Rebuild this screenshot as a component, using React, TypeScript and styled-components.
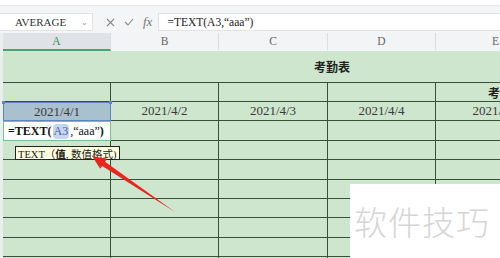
import styled, { createGlobalStyle } from "styled-components";

const GlobalStyle = createGlobalStyle`
  html, body { margin: 0; padding: 0; background: #fff; }
  #root { width: 500px; height: 258px; overflow: hidden; }
`;

const SERIF = `"Liberation Serif", "Noto Sans CJK SC", serif`;
const GRID = "#36503a";
const FILL = "#cde6cd";
const COLS = [108, 108, 109, 108, 120];

const Page = styled.div`
  position: relative;
  width: 500px;
  height: 258px;
  overflow: hidden;
  font-family: ${SERIF};
`;

const TopStrip = styled.div`
  height: 5px;
  background: #fff;
  border-bottom: 1px solid #e6e6e6;
`;

const Spacer = styled.div<{ $h: number }>`
  height: ${(p) => p.$h}px;
  background: #f4f5f6;
`;

const FormulaBar = styled.div`
  display: flex;
  align-items: center;
  height: 18px;
  background: #f4f5f6;
`;

const NameBox = styled.div`
  box-sizing: border-box;
  width: 93px;
  height: 18px;
  display: flex;
  align-items: center;
  justify-content: space-between;
  padding: 0 4px 0 15px;
  background: #fff;
  border: 1px solid #e2e2e2;
  border-left: none;
  font-size: 11px;
  color: #333;
`;

const Caret = styled.span`
  font-size: 8px;
  color: #999;
`;

const Tools = styled.div`
  display: flex;
  align-items: center;
  gap: 9px;
  padding: 0 6px 0 13px;
  color: #8a8a8a;
`;

const FxLabel = styled.span`
  font-family: "Liberation Serif", serif;
  font-style: italic;
  font-size: 13px;
  color: #7a7a7a;
`;

const FormulaInput = styled.div`
  box-sizing: border-box;
  flex: 1;
  height: 18px;
  display: flex;
  align-items: center;
  padding-left: 8px;
  background: #fff;
  border: 1px solid #e2e2e2;
  border-right: none;
  font-size: 11.5px;
  color: #222;
`;

const HeaderRow = styled.div`
  display: flex;
  height: 18px;
  background: #f3f4f6;
`;

const Corner = styled.div`
  width: 3px;
  flex: none;
  background: #eceeef;
`;

const ColHead = styled.div<{ $w: number; $active?: boolean }>`
  box-sizing: border-box;
  flex: none;
  width: ${(p) => p.$w}px;
  display: flex;
  align-items: center;
  justify-content: center;
  font-size: 11.5px;
  color: ${(p) => (p.$active ? "#3b8a5c" : "#666")};
  background: ${(p) => (p.$active ? "#dfe2e6" : "transparent")};
  border-right: 1px solid #dcdcdc;
  border-bottom: 2px solid ${(p) => (p.$active ? "#45a66d" : "transparent")};
`;

const Sheet = styled.div`
  display: flex;
  flex-direction: column;
  background: ${FILL};
`;

const Row = styled.div<{ $h: number }>`
  display: flex;
  height: ${(p) => p.$h}px;
  flex: none;
`;

const Gutter = styled.div`
  width: 3px;
  flex: none;
  background: #e9efea;
`;

const TitleCell = styled.div`
  box-sizing: border-box;
  flex: none;
  width: 658px;
  display: flex;
  align-items: center;
  justify-content: center;
  padding-bottom: 1px;
  border-bottom: 1px solid ${GRID};
  font-family: "Noto Sans CJK SC", sans-serif;
  font-weight: 700;
  font-size: 12px;
  color: #222;
`;

const Cell = styled.div<{ $w: number; $align?: string; $pad?: number }>`
  box-sizing: border-box;
  flex: none;
  width: ${(p) => p.$w}px;
  display: flex;
  align-items: center;
  justify-content: ${(p) => p.$align ?? "center"};
  padding-left: ${(p) => p.$pad ?? 0}px;
  border-right: 1px solid ${GRID};
  border-bottom: 1px solid ${GRID};
  font-size: 13px;
  color: #3a3a3a;
  white-space: nowrap;
  overflow: hidden;
`;

const HeadText = styled.span`
  font-family: "Noto Sans CJK SC", sans-serif;
  font-weight: 700;
  font-size: 12px;
  color: #222;
`;

const SelectedCell = styled(Cell)`
  position: relative;
  background: #a9c0cf;
  border: 1px solid #5c86c4;
  overflow: visible;
`;

const Handle = styled.span<{ $side: "l" | "r" }>`
  position: absolute;
  top: -2px;
  ${(p) => (p.$side === "l" ? "left: -2px;" : "right: -2px;")}
  width: 3px;
  height: 3px;
  background: #5c86c4;
`;

const EditCell = styled(Cell)`
  background: #fff;
  border: 1px solid #7cbf95;
  padding-left: 4px;
  justify-content: flex-start;
  font-size: 12px;
  color: #111;
  overflow: visible;
`;

const Fn = styled.span`
  font-weight: 700;
`;

const Ref = styled.span`
  background: #c9d5ec;
  color: #3d5aa8;
  border-radius: 4px;
  padding: 0 1px;
  margin: 0 1px;
`;

const Tip = styled.div`
  position: absolute;
  left: 15px;
  top: 146px;
  height: 12px;
  padding: 0 2px;
  display: flex;
  align-items: center;
  background: #ffffe1;
  border: 1px solid #222;
  font-family: ${SERIF};
  font-size: 10.5px;
  color: #222;
  white-space: nowrap;
`;

const Arrow = styled.svg`
  position: absolute;
  left: 0;
  top: 0;
  pointer-events: none;
`;

const Watermark = styled.div`
  position: absolute;
  left: 350px;
  top: 184px;
  width: 150px;
  height: 74px;
  background: #fff;
  display: flex;
  align-items: center;
  padding-left: 4px;
  box-sizing: border-box;
  font-family: "Noto Sans CJK SC", sans-serif;
  font-weight: 300;
  font-size: 33px;
  letter-spacing: 1px;
  color: #d6d6d6;
`;

const dates = ["2021/4/2", "2021/4/3", "2021/4/4", "2021/4/5"];
const ROW_H = 19.4;

export default function App() {
  const blank = (key: string) => (
    <Row $h={ROW_H} key={key}>
      <Gutter />
      {COLS.map((w, i) => (
        <Cell $w={w} key={i} />
      ))}
    </Row>
  );

  return (
    <Page>
      <GlobalStyle />
      <TopStrip />
      <Spacer $h={7} />
      <FormulaBar>
        <NameBox>
          AVERAGE
          <Caret>⌄</Caret>
        </NameBox>
        <Tools>
          <svg width="9" height="9" viewBox="0 0 9 9">
            <path d="M1 1 L8 8 M8 1 L1 8" stroke="#8a8a8a" strokeWidth="1.1" />
          </svg>
          <svg width="10" height="8" viewBox="0 0 10 8">
            <path d="M1 4 L4 7 L9 1" stroke="#8a8a8a" strokeWidth="1.1" fill="none" />
          </svg>
          <FxLabel>fx</FxLabel>
        </Tools>
        <FormulaInput>=TEXT(A3,“aaa”)</FormulaInput>
      </FormulaBar>
      <Spacer $h={2} />
      <HeaderRow>
        <Corner />
        {["A", "B", "C", "D", "E"].map((c, i) => (
          <ColHead $w={COLS[i]} $active={c === "A"} key={c}>
            {c}
          </ColHead>
        ))}
      </HeaderRow>
      <Sheet>
        <Row $h={32}>
          <Gutter />
          <TitleCell>考勤表</TitleCell>
        </Row>
        <Row $h={19}>
          <Gutter />
          {COLS.slice(0, 4).map((w, i) => (
            <Cell $w={w} key={i} />
          ))}
          <Cell $w={COLS[4]} $align="flex-start" $pad={52}>
            <HeadText>考勤</HeadText>
          </Cell>
        </Row>
        <Row $h={ROW_H}>
          <Gutter />
          <SelectedCell $w={COLS[0]}>
            2021/4/1
            <Handle $side="l" />
            <Handle $side="r" />
          </SelectedCell>
          {dates.map((d, i) => (
            <Cell $w={COLS[i + 1]} key={d}>
              {d}
            </Cell>
          ))}
        </Row>
        <Row $h={ROW_H}>
          <Gutter />
          <EditCell $w={COLS[0]}>
            <Fn>=TEXT(</Fn>
            <Ref>A3</Ref>,“aaa”<Fn>)</Fn>
          </EditCell>
          {COLS.slice(1).map((w, i) => (
            <Cell $w={w} key={i} />
          ))}
        </Row>
        {Array.from({ length: 7 }, (_, i) => blank(`r${i}`))}
      </Sheet>

      <Tip>
        TEXT（<b>值</b>, 数值格式)
      </Tip>

      <Arrow width="500" height="258" viewBox="0 0 500 258">
        <polygon
          points="92,156 107,158.8 105,161.7 175,212 102.2,165.9 100.2,168.8"
          fill="#e8261e"
        />
      </Arrow>

      <Watermark>软件技巧</Watermark>
    </Page>
  );
}
